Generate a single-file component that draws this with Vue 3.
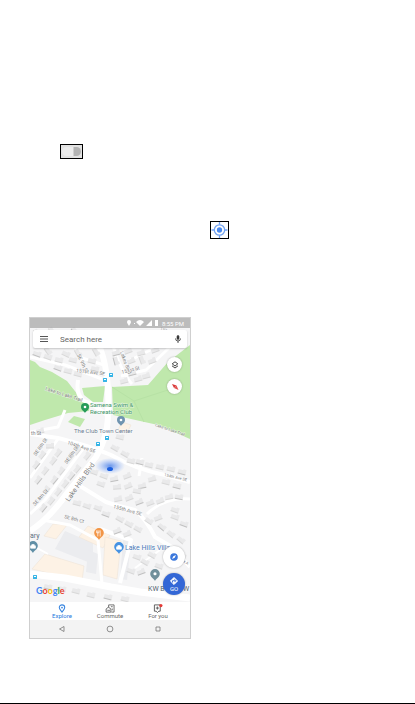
<template>
  <main class="page">
    <label class="switch-row">
      <input v-model="enabled" type="checkbox" class="switch" aria-label="Location" />
    </label>
    <div class="locate-row">
      <button class="locate" type="button" aria-label="My location">
        <svg viewBox="0 0 17 17">
          <circle cx="8.500" cy="8.500" r="5.500" fill="none" stroke="#74a4f2" stroke-width="1.400" />
          <circle cx="8.500" cy="8.500" r="2.800" fill="#4a8af0" />
          <path d="M8.500 0v3M8.500 14v3M0 8.500h3M14 8.500h3" stroke="#74a4f2" stroke-width="1.400" />
        </svg>
      </button>
    </div>

    <section class="phone">
      <div class="map">
        <svg class="map-canvas" viewBox="0 0 160 284" preserveAspectRatio="xMidYMid slice">
          <rect width="160" height="284" fill="#f5f5f6" />
          <path v-for="(d, i) in parks" :key="'p' + i" :d="d" fill="#bfe8ac" />
          <path d="M82 69l22 14 40-13M104 83l10 21" stroke="#b7e2a5" fill="none" />
          <path v-for="(d, i) in lots" :key="'l' + i" :d="d" fill="#ebecef" />
          <path v-for="(d, i) in shops" :key="'s' + i" :d="d" fill="#fdf2e5" stroke="#eee4d8" stroke-width=".6" />
          <g fill="none" stroke="#fff" stroke-linejoin="round">
            <path v-for="(r, i) in roads" :key="'r' + i" :d="r.d" :stroke-width="r.w" />
          </g>
          <g v-for="(b, i) in houses" :key="'h' + i" :transform="`translate(${b[0]} ${b[1]}) rotate(${b[2]})`">
            <path d="M-4-2h5v-1h3v5h-8z" fill="#e9e9ea" />
            <path d="M-4 2h8" :stroke="i % 4 === 0 ? '#c0c0c0' : '#d8d8d8'" />
          </g>

          <g class="street">
            <text v-for="(s, i) in streets" :key="'t' + i" :transform="`translate(${s.x} ${s.y}) rotate(${s.r})`" :font-size="s.size || 5">{{ s.name }}</text>
          </g>

          <g v-for="(s, i) in stops" :key="'b' + i" :transform="`translate(${s[0]} ${s[1]})`">
            <rect width="4" height="4" rx=".5" fill="#36b4e6" />
            <path d="M1 1h2v1H1z" fill="#fff" />
          </g>

          <defs>
            <radialGradient id="beam">
              <stop offset="0" stop-color="#2c6be5" stop-opacity=".7" />
              <stop offset="1" stop-color="#5b94ff" stop-opacity="0" />
            </radialGradient>
          </defs>
          <ellipse cx="80" cy="148" rx="15" ry="8" fill="url(#beam)" />
          <ellipse cx="80" cy="151" rx="3" ry="2" fill="#1c60e0" />

          <g v-for="(p, i) in pins" :key="'m' + i" :transform="`translate(${p.x} ${p.y}) scale(${p.s})`">
            <path d="M0 5C-1 3-4 2-4-1a4 4 0 0 1 8 0C4 2 1 3 0 5z" :fill="p.color" />
            <path v-if="p.kind === 'food'" d="M-1-3v5M1-3v5M-2-3v2h2v-2" stroke="#fff" stroke-width=".6" fill="none" />
            <path v-else-if="p.kind === 'shop'" d="M-2-1h4v2h-4zM-1-1v-1h2v1" stroke="#fff" stroke-width=".6" fill="#fff" />
            <circle v-else cy="-1" r="1.300" fill="#fff" />
          </g>

          <g class="place">
            <text x="60" y="89" font-size="6" fill="#3a9465">Samena Swim &amp;</text>
            <text x="60" y="96" font-size="6" fill="#3a9465">Recreation Club</text>
            <text x="44" y="115" font-size="6" fill="#6a7a90">The Club Town Center</text>
            <text x="95" y="232" font-size="7" fill="#4d7bb8">Lake Hills Villa</text>
            <text x="0" y="220" font-size="7" fill="#5a6e80">ary</text>
            <text x="118" y="273" font-size="7" fill="#50606d">KW B</text>
            <text x="153" y="273" font-size="7" fill="#50606d">W</text>
          </g>
          <text class="google" x="6" y="276" font-size="9">
            <tspan fill="#4285f4">G</tspan><tspan fill="#ea4335">o</tspan><tspan fill="#fbbc05">o</tspan><tspan fill="#4285f4">g</tspan><tspan fill="#34a853">l</tspan><tspan fill="#ea4335">e</tspan>
          </text>
        </svg>

        <div class="overlay">
          <div class="status">
            <svg viewBox="0 0 34 8" class="status-icons">
              <path d="M3 7C2 5 1 4 1 3a2 2 0 0 1 4 0c0 1-1 2-2 4zM8 4h1v1H8zM10 3q4-4 8 0l-4 4zM20 7l6-6v6zM29 1h3v6h-3z" fill="#fff" />
            </svg>
            <span>8:55 PM</span>
          </div>
          <form class="search" @submit.prevent>
            <button type="button" class="plain" aria-label="Menu">
              <svg viewBox="0 0 8 8"><path d="M0 1.500h8M0 4h8M0 6.500h8" stroke="#555" /></svg>
            </button>
            <input v-model="query" type="text" placeholder="Search here" aria-label="Search here" />
            <button type="button" class="plain" aria-label="Voice search">
              <svg viewBox="0 0 8 8"><path d="M3 1.500a1 1 0 0 1 2 0v2a1 1 0 0 1-2 0z" fill="#333" stroke="#333" stroke-width=".6" /><path d="M1.500 3.500a2.500 2.500 0 0 0 5 0M4 6v2" fill="none" stroke="#444" stroke-width=".9" /></svg>
            </button>
          </form>
          <div class="tools">
            <button type="button" class="round" aria-label="Layers">
              <svg viewBox="0 0 8 8"><path d="M4 .8l2.800 2L4 5 1.200 2.800z" fill="none" stroke="#444" stroke-width="1" /><path d="M1 4.800L4 7l3-2.200" fill="none" stroke="#444" stroke-width="1" /></svg>
            </button>
            <button type="button" class="round" aria-label="Compass">
              <svg viewBox="0 0 8 8"><path d="M1 1l4.500 1.500L3 5z" fill="#d93838" /><path d="M5.500 2.500L7.500 7 3 5z" fill="#e05350" /></svg>
            </button>
          </div>
          <div class="actions">
            <button type="button" class="round big" aria-label="Recenter">
              <svg viewBox="0 0 8 8"><circle cx="4" cy="4" r="3.800" fill="#3b78dc" /><path d="M6 2L4.700 4.700 2 6l1.300-2.700z" fill="#fff" /></svg>
            </button>
            <button type="button" class="round big go">
              <svg viewBox="0 0 8 8"><path d="M4 .4L7.600 4 4 7.600.4 4z" fill="#fff" stroke="#fff" stroke-linejoin="round" stroke-width=".8" /><path d="M2.500 5.500V3.700h3M4.500 2.300l1.400 1.400-1.400 1.400" fill="none" stroke="#3367d6" stroke-width=".9" /></svg>
              <span>GO</span>
            </button>
          </div>
        </div>
      </div>

      <nav class="tabs">
        <a href="#explore" class="active">
          <svg viewBox="0 0 10 10"><path d="M5 9C4 7 2 6 2 4a3 3 0 0 1 6 0C8 6 6 7 5 9z" fill="none" stroke="#3b87e0" stroke-width="1.200" /><circle cx="5" cy="4" r="1" fill="#3b87e0" /></svg>
          <span>Explore</span>
        </a>
        <a href="#commute">
          <svg viewBox="0 0 10 10"><path d="M3.500 4V1h6v8h-3M.7 9V5.500l2.500-2 2.800 2V9zM2 7h3M6 3h2M7.500 5v2" fill="none" stroke="#666" stroke-width="1" /></svg>
          <span>Commute</span>
        </a>
        <a href="#foryou">
          <svg viewBox="0 0 10 10"><path d="M1 1h6.500v7H6L4.300 9.500 3 8H1zM4.300 2.800v3.400M2.600 4.500H6" fill="none" stroke="#555" stroke-width="1" /><circle cx="8.200" cy="1.800" r="1.800" fill="#e53935" /></svg>
          <span>For you</span>
        </a>
      </nav>
      <div class="keys">
        <button type="button" class="plain" aria-label="Back"><svg viewBox="0 0 8 8"><path d="M6 1.500v5L1.500 4z" fill="none" stroke="#777" stroke-width=".8" /></svg></button>
        <button type="button" class="plain" aria-label="Home"><svg viewBox="0 0 8 8"><circle cx="4" cy="4" r="2.900" fill="none" stroke="#777" stroke-width=".8" /></svg></button>
        <button type="button" class="plain" aria-label="Recents"><svg viewBox="0 0 8 8"><path d="M2 2h4v4H2z" fill="none" stroke="#777" stroke-width=".8" /></svg></button>
      </div>
    </section>
  </main>
</template>

<script setup>
import { ref } from 'vue'

const enabled = ref(false)
const query = ref('')

const parks = [
  'M0 42l5 2 5 5 12 5 15 9 11 14 12 7-1 9-21 2-23 7-15 5z',
  'M52 70l23-2-2 16H63l-9-7z',
  'M44 98l11 3-5 8-12-5z',
  'M82 69l36-2 20-23 22-17v94l-32-14-45-10z'
]

const lots = [
  'M35 213l28 12 0 21-38-15z',
  'M58 232l10 4-2 20-10-2z',
  'M93 222l8 2-4 38-7-1z'
]

const shops = [
  'M58 208l22 9-7 13-24-11z',
  'M23 206l14 1-11 14-12-3z',
  'M15 236l39 12-2 15-50-12z',
  'M75 219l16 4-4 38-14-4z',
  'M92 104l9 3-4 8-9-3z'
]

const roads = [
  { d: 'M70 30Q80 55 78 100Q77 120 66 139L38 174Q20 200 0 213', w: 6 },
  { d: 'M0 116L28 120Q60 128 81 137Q105 151 135 157L160 164', w: 4 },
  { d: 'M48 62Q45 82 60 85L76 96', w: 4 },
  { d: 'M0 39L35 47 72 61', w: 3 },
  { d: 'M42 24L52 40 74 47', w: 3 },
  { d: 'M28 121L0 160M55 128L15 182 0 196', w: 3 },
  { d: 'M83 28Q92 55 102 66M91 58L116 52 140 29M95 45L126 29', w: 3 },
  { d: 'M50 168L76 184Q90 189 105 192Q116 201 125 219L142 229 160 249', w: 4 },
  { d: 'M112 140L109 158M117 196Q134 179 160 181', w: 3 },
  { d: 'M0 256L35 260 81 269 110 274 160 280', w: 7 },
  { d: 'M12 202L40 207 68 222 72 266', w: 3 },
  { d: 'M70 211L101 222 90 265', w: 4 },
  { d: 'M0 114L28 109 35 92', w: 3 },
  { d: 'M0 226L18 236M130 232L105 250', w: 2 }
]

// x, y, rotation
const houses = [
  [7, 15, 60], [18, 33, 55], [22, 13, 60], [36, 36, 25], [45, 13, 55], [48, 35, 60],
  [56, 16, 50], [66, 34, 60], [86, 35, -15], [98, 33, -20], [111, 35, -15], [125, 32, -20],
  [86, 43, 75], [101, 43, -20], [112, 42, 70], [122, 43, -20], [102, 55, -15], [94, 63, -15],
  [108, 61, -15], [116, 58, -15], [7, 36, 20], [18, 39, 20], [29, 42, 15], [43, 42, 15],
  [28, 50, 20], [38, 53, 15], [48, 56, 15], [62, 43, 15], [65, 51, 15], [10, 113, -10],
  [20, 128, 0], [12, 137, -50], [6, 147, -50], [28, 135, -50], [23, 143, -50], [15, 153, -50],
  [8, 162, -50], [47, 133, -50], [40, 139, -50], [31, 153, -50], [24, 162, -50], [16, 172, -50],
  [57, 138, -50], [47, 151, -50], [41, 158, -50], [35, 166, -50], [28, 174, -50], [21, 183, -50],
  [13, 190, -50], [64, 154, 20], [74, 158, 20], [71, 166, 20], [84, 161, -10], [97, 158, -20],
  [87, 169, -5], [98, 168, -20], [112, 168, -10], [107, 173, 10], [122, 161, -15],
  [136, 164, 15], [147, 168, 15], [85, 130, 30], [95, 136, 30], [101, 143, 15], [110, 144, 15],
  [119, 147, 15], [130, 149, 15], [141, 151, 15], [152, 154, 15], [90, 119, 15],
  [88, 181, -10], [99, 180, -20], [109, 184, -20], [120, 185, -20], [130, 183, -20], [139, 179, -10], [149, 179, 10],
  [47, 185, 15], [57, 188, 20], [68, 190, 20], [76, 196, 20], [90, 201, 30], [99, 206, 30],
  [108, 211, 30], [87, 213, -20], [97, 216, -20], [119, 203, 35], [128, 200, -20], [132, 209, 40],
  [141, 216, 40], [151, 222, 40], [145, 199, 20], [154, 206, 20], [107, 239, 20], [115, 244, 30],
  [122, 237, 30], [111, 254, -20], [129, 248, 20], [101, 253, 20], [152, 238, 30],
  [18, 269, 15], [32, 271, 15], [46, 273, 15], [61, 277, 15], [78, 279, 15], [95, 281, 15], [145, 192, 20]
]

const streets = [
  { name: 'SE 9th St', x: 47, y: 37, r: 65 },
  { name: '151st Ave SE', x: 46, y: 54, r: 7 },
  { name: '152nd Ave', x: 130, y: 12, r: 15, size: 4 },
  { name: 'Lakes Blvd', x: 90, y: 34, r: 70 },
  { name: '151st St', x: 92, y: 56, r: -15 },
  { name: 'Lake to Lake Trail', x: 15, y: 72, r: 18 },
  { name: 'Lake to Lake Trail', x: 125, y: 108, r: 19, size: 4 },
  { name: '104th Ave SE', x: 37, y: 126, r: 18 },
  { name: 'SE 8th St', x: 6, y: 138, r: -55 },
  { name: 'SE 8th St', x: 37, y: 146, r: -55 },
  { name: 'SE 8th St', x: 5, y: 188, r: -48 },
  { name: 'Lake Hills Blvd', x: 39, y: 184, r: -55, size: 7 },
  { name: '154th Ave SE', x: 134, y: 158, r: 13, size: 4 },
  { name: '155th Ave SE', x: 83, y: 190, r: 15 },
  { name: 'SE 8th Ct', x: 34, y: 200, r: 15 },
  { name: 'th St', x: 1, y: 117, r: 0 },
  { name: 'lk A', x: 152, y: 244, r: 25, size: 4 }
]

const stops = [[79, 55], [73, 60], [75, 118], [66, 124], [3, 257]]

const pins = [
  { x: 55, y: 90, s: 1, color: '#279b59' },
  { x: 91, y: 103, s: 1, color: '#7094b0' },
  { x: 69, y: 216, s: 1.2, color: '#f29546', kind: 'food' },
  { x: 89, y: 230, s: 1.2, color: '#4592e3', kind: 'shop' },
  { x: 125, y: 257, s: 1.2, color: '#708f9b' },
  { x: 3, y: 229, s: 1.2, color: '#608fa6', kind: 'shop' }
]
</script>

<style>
body {
  margin: 0;
  background: #fff;
}
</style>

<style scoped>
.page {
  box-sizing: border-box;
  min-height: 100vh;
  display: flex;
  flex-direction: column;
  align-items: flex-start;
  padding: 144px 29px 64px;
  border-bottom: 1px solid #000;
  font-family: Roboto, "Liberation Sans", sans-serif;
}

button {
  padding: 0;
  border: 0;
  font-family: inherit;
}

svg {
  display: block;
}

.switch-row {
  display: flex;
  padding-left: 31px;
}

.switch {
  appearance: none;
  box-sizing: border-box;
  display: flex;
  width: 23px;
  height: 15px;
  margin: 0;
  padding: 2px 1px;
  border: 1px solid #000;
  background: #e2e2e2;
}

.switch::before {
  content: "";
  flex: 1;
  border-radius: 5px;
  background: linear-gradient(90deg, #ececec 11px, #b3b3b3 12px);
}

.switch:checked::before {
  background: #8ab4f8;
}

.locate-row {
  align-self: stretch;
  display: flex;
  padding: 62px 0 78px 181px;
}

.locate {
  box-sizing: border-box;
  width: 19px;
  height: 18px;
  border: 1px solid #000;
  background: #fff;
}

.locate svg {
  width: 100%;
  height: 100%;
}

.phone {
  box-sizing: border-box;
  width: 39%;
  min-width: 162px;
  border: 1px solid #cfcfcf;
  background: #fff;
}

.map {
  position: relative;
}

.map-canvas {
  width: 100%;
}

.street {
  fill: #808080;
  font-family: Roboto, sans-serif;
}

.street text,
.place text {
  paint-order: stroke;
  stroke: #fff;
  stroke-opacity: 0.6;
  stroke-width: 1px;
}

.google {
  font-family: Lato, sans-serif;
  font-weight: bold;
}

.overlay {
  position: absolute;
  inset: 0;
  display: flex;
  flex-direction: column;
}

.status {
  display: flex;
  justify-content: flex-end;
  align-items: center;
  gap: 2px;
  height: 10px;
  padding-right: 6px;
  background: rgba(150, 150, 150, 0.6);
  color: #fff;
  font-size: 6px;
}

.status-icons {
  width: 34px;
  height: 8px;
}

.search {
  display: flex;
  align-items: center;
  height: 18px;
  margin: 2px 3px 0;
  padding: 0 5px 0 7px;
  border-radius: 2px;
  background: #fff;
  box-shadow: 0 1px 2px rgba(0, 0, 0, 0.2);
}

.search input {
  flex: 1;
  min-width: 0;
  padding: 0 12px;
  border: 0;
  outline: 0;
  background: none;
  color: #555;
  font: 8px Roboto, sans-serif;
}

.search input::placeholder {
  color: #666;
}

.plain {
  background: none;
}

.plain svg {
  width: 8px;
  height: 8px;
}

.tools,
.actions {
  display: flex;
  flex-direction: column;
  align-items: flex-end;
  padding-right: 8px;
}

.tools {
  gap: 7px;
  padding-top: 9px;
}

.actions {
  gap: 5px;
  margin-top: auto;
  padding: 0 5px 7px 0;
}

.round {
  display: flex;
  flex-direction: column;
  align-items: center;
  justify-content: center;
  width: 15px;
  height: 15px;
  border-radius: 50%;
  background: #fff;
  box-shadow: 0 0 2px rgba(0, 0, 0, 0.3);
}

.round svg {
  width: 8px;
  height: 8px;
}

.big {
  width: 22px;
  height: 22px;
}

.go {
  background: #3367d6;
  color: #fff;
  font-size: 6px;
  line-height: 7px;
}

.tabs,
.keys {
  display: flex;
  justify-content: space-around;
  height: 18px;
  padding: 0 8px;
}

.tabs a {
  display: flex;
  flex: 1;
  flex-direction: column;
  align-items: center;
  padding-top: 2px;
  color: #666;
  font-size: 6px;
  line-height: 6px;
  text-decoration: none;
}

.tabs .active {
  color: #2879dd;
}

.tabs svg {
  width: 10px;
  height: 9px;
}

.keys {
  align-items: center;
  background: #f3f3f3;
}

.keys .plain {
  display: flex;
  flex: 1;
  justify-content: center;
}
</style>
